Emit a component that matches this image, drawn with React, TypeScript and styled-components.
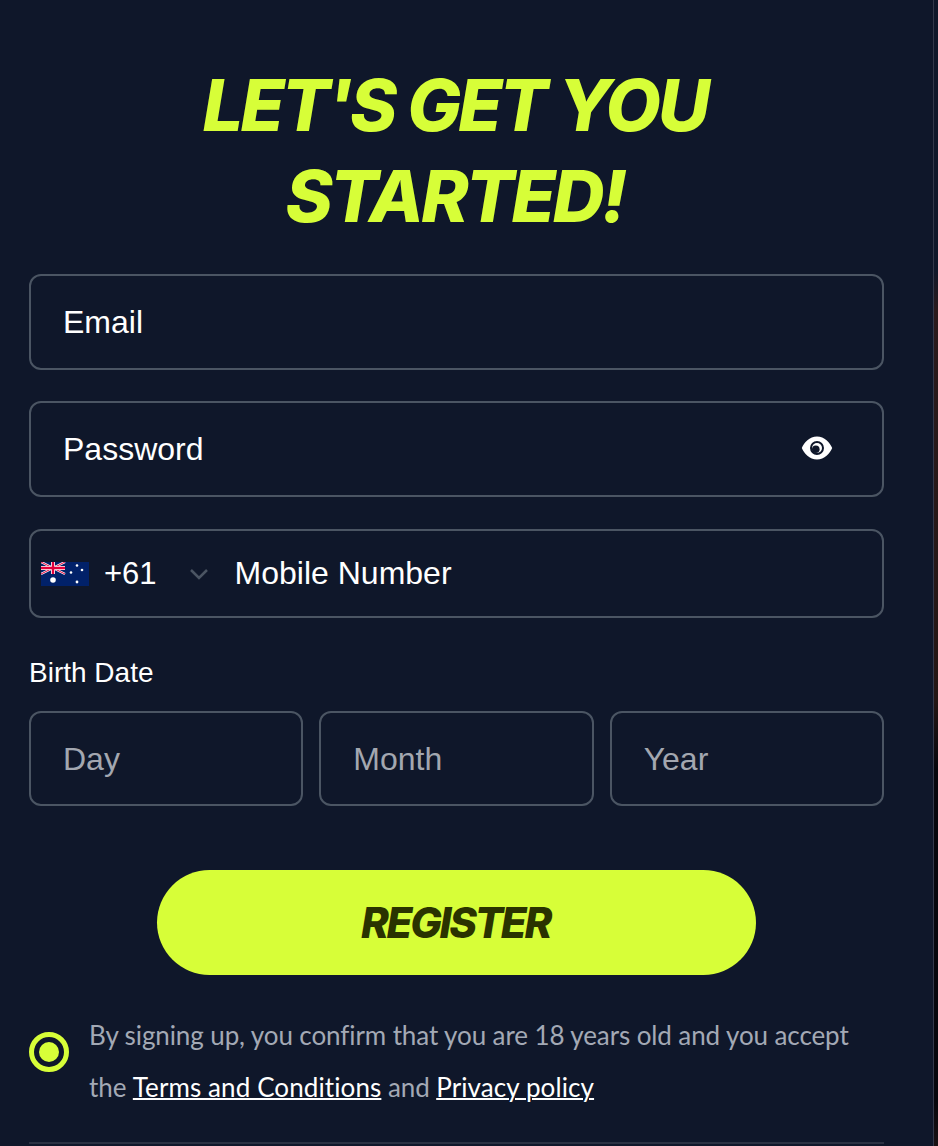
import { createGlobalStyle } from "styled-components"
import styled from "styled-components"

/** Component */
const App = () => {
    return (
        <Page>
            <GlobalStyle />
            <Panel>
                <Title>LET'S GET YOU<br />STARTED!</Title>
                <Form>
                    <Field>Email</Field>
                    <Field>
                        Password
                        <EyeSlot>
                            <svg width="32" height="24" viewBox="0 0 32 24">
                                <path fill="#fff" fillRule="evenodd" d="M16 .5C8.500.5 3 6.500 .8 12c2.200 5.500 7.700 11.500 15.200 11.500S29 17.500 31.200 12C29 6.500 23.500.5 16 .5ZM16 5a7 7 0 1 1 0 14a7 7 0 0 1 0-14Z" />
                                <circle cx="16" cy="12" r="5" fill="#fff" />
                                <circle cx="14.800" cy="13.200" r="3.800" fill="#0f172a" />
                            </svg>
                        </EyeSlot>
                    </Field>
                    <PhoneField>
                        <Flag width="48" height="24" viewBox="0 0 48 24">
                            <rect width="48" height="24" fill="#012169" />
                            <path d="M0 0L24 12M24 0L0 12" stroke="#fff" strokeWidth="2.400" />
                            <path d="M0 0L24 12M24 0L0 12" stroke="#e4003b" strokeWidth="1" />
                            <path d="M12 0V12M0 6H24" stroke="#fff" strokeWidth="4" />
                            <path d="M12 0V12M0 6H24" stroke="#e4003b" strokeWidth="2.400" />
                            <circle cx="12" cy="18" r="2.800" fill="#fff" />
                            <circle cx="36" cy="3.500" r="1.300" fill="#fff" />
                            <circle cx="30" cy="10.500" r="1.300" fill="#fff" />
                            <circle cx="41" cy="8" r="1.300" fill="#fff" />
                            <circle cx="36" cy="20" r="1.400" fill="#fff" />
                        </Flag>
                        <Code>+61</Code>
                        <Chevron width="20" height="12" viewBox="0 0 20 12">
                            <path d="M2 2L10 10L18 2" fill="none" stroke="#4b5563" strokeWidth="2.500" />
                        </Chevron>
                        <span>Mobile Number</span>
                    </PhoneField>
                    <BirthLabel>Birth Date</BirthLabel>
                    <DateRow>
                        <DateField>Day</DateField>
                        <DateField>Month</DateField>
                        <DateField>Year</DateField>
                    </DateRow>
                </Form>
                <Register>REGISTER</Register>
                <Consent>
                    <Radio />
                    <ConsentText>
                        By signing up, you confirm that you are 18 years old and you accept
                        the <a>Terms and Conditions</a> and <a>Privacy policy</a>
                    </ConsentText>
                </Consent>
                <Divider />
            </Panel>
        </Page>
    )
}

/** Styles */

const GlobalStyle = createGlobalStyle`
    html, body {
        margin: 0;
        padding: 0;
        background: #0f172a;
    }
`
const Page = styled.div`
    display: flex;
    justify-content: flex-start;
    height: 1146px;
    overflow: hidden;
    background: linear-gradient(#10182a 0, #10182a 270px, #2a1a1c 310px, #241614 700px, #06060c 770px, #06060c 1100px, #1a1214 1146px);
`
const Panel = styled.div`
    box-sizing: border-box;
    width: 934px;
    padding: 60px 49px 0 29px;
    background: #0f172a;
    border-right: 1px solid #33384a;
`
const Title = styled.h1`
    margin: 0;
    padding-right: 3px;
    font-family: Inter, sans-serif;
    font-size: 71.500px;
    font-style: italic;
    font-weight: 800;
    line-height: 91px;
    letter-spacing: -2.800px;
    text-align: center;
    color: #d7fe38;
`
const Form = styled.div`
    display: flex;
    flex-direction: column;
    margin-top: 32px;
    font-family: "Liberation Sans", Arial, sans-serif;
    font-size: 32px;
    color: #fff;
`
const Field = styled.div`
    box-sizing: border-box;
    display: flex;
    align-items: center;
    justify-content: space-between;
    height: 95.500px;
    margin-bottom: 31.500px;
    padding: 1px 49px 0 32px;
    border: 2px solid #4b5563;
    border-radius: 12px;
`
const EyeSlot = styled.span`
    display: flex;
    margin-top: -3px;
`
const PhoneField = styled(Field)`
    height: 89px;
    margin-top: 0.500px;
    margin-bottom: 38.500px;
    justify-content: flex-start;
    padding: 1px 0 0 10px;
`
const Flag = styled.svg`
    flex: none;
`
const Code = styled.span`
    margin-left: 15px;
    font-size: 31px;
`
const Chevron = styled.svg`
    margin-left: 32px;
    margin-right: 26px;
`
const BirthLabel = styled.div`
    font-size: 28px;
    line-height: 34px;
    margin-bottom: 21px;
`
const DateRow = styled.div`
    display: grid;
    grid-template-columns: repeat(3, 1fr);
    gap: 16px;
`
const DateField = styled(Field)`
    height: 95px;
    margin-bottom: 0;
    color: #a3a7b0;
`
const Register = styled.button`
    display: block;
    width: 599px;
    height: 105px;
    margin: 64px auto 0;
    padding-right: 8px;
    border: 0;
    border-radius: 53px;
    background: #d7fe38;
    color: #2a3300;
    font-family: Inter, sans-serif;
    font-size: 42px;
    font-style: italic;
    font-weight: 800;
    letter-spacing: -2.300px;
`
const Consent = styled.div`
    display: flex;
    align-items: flex-start;
    gap: 20px;
    margin-top: 34px;
`
const Radio = styled.span`
    box-sizing: border-box;
    flex: none;
    width: 40px;
    height: 40px;
    margin-top: 23px;
    border: 5px solid #d7fe38;
    border-radius: 50%;
    background: #d7fe38;
    background-clip: content-box;
    padding: 5px;
`
const ConsentText = styled.div`
    font-family: Lato, sans-serif;
    font-size: 26px;
    line-height: 52px;
    letter-spacing: -0.100px;
    font-variant-ligatures: none;
    color: #a3a9b5;

    a {
        color: #fff;
        letter-spacing: 0.100px;
        text-decoration: underline;
        text-decoration-thickness: 2px;
    }
`
const Divider = styled.div`
    height: 2px;
    margin-top: 29px;
    background: #2a3142;
`

/** Exports */

export default App
